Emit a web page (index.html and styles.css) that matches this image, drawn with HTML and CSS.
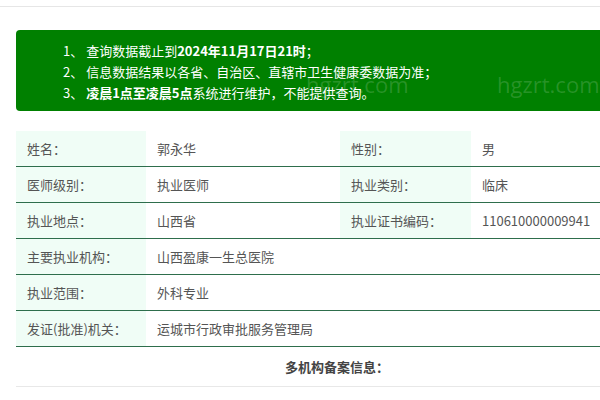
FILE: index.html
```html
<!DOCTYPE html>
<html lang="zh">
<head>
<meta charset="utf-8">
<link rel="stylesheet" href="styles.css">
</head>
<body>
<div class="topline"></div>
<div class="wrap">
  <div class="notice">
    <p>1、 查询数据截止到<b>2024年11月17日21时</b>；</p>
    <p>2、 信息数据结果以各省、自治区、直辖市卫生健康委数据为准；</p>
    <p>3、 <b>凌晨1点至凌晨5点</b>系统进行维护，不能提供查询。</p>
    <span class="wm wm1">hgzrt.com</span>
    <span class="wm wm2">hgzrt.com</span>
  </div>
  <table class="info">
    <colgroup>
      <col class="c1"><col class="c2"><col class="c3"><col class="c4">
    </colgroup>
    <tr><td class="lab">姓名：</td><td>郭永华</td><td class="lab">性别：</td><td>男</td></tr>
    <tr><td class="lab">医师级别：</td><td>执业医师</td><td class="lab">执业类别：</td><td>临床</td></tr>
    <tr><td class="lab">执业地点：</td><td>山西省</td><td class="lab">执业证书编码：</td><td>110610000009941</td></tr>
    <tr><td class="lab">主要执业机构：</td><td colspan="3">山西盈康一生总医院</td></tr>
    <tr><td class="lab">执业范围：</td><td colspan="3">外科专业</td></tr>
    <tr><td class="lab">发证(批准)机关：</td><td colspan="3">运城市行政审批服务管理局</td></tr>
    <tr class="multi"><td colspan="4">多机构备案信息：</td></tr>
  </table>
</div>
</body>
</html>
```
FILE: styles.css
```css
html, body {
  margin: 0;
  padding: 0;
  overflow: hidden;
  background: #fff;
  font-family: "Noto Sans CJK SC", "Noto Sans", sans-serif;
  font-size: 13px;
  color: #555;
}
.topline {
  height: 1px;
  margin-top: 6px;
  background: #e6e6e6;
}
.wrap {
  width: 642px;
  padding: 0 16px;
}
.notice {
  position: relative;
  margin-top: 23px;
  background: #008000;
  border-radius: 4px;
  padding: 10px 0 8px 47px;
  color: #fff;
  line-height: 21px;
  overflow: hidden;
}
.notice p {
  margin: 0;
}
.notice b {
  font-weight: bold;
}
.wm {
  position: absolute;
  top: 44px;
  font-family: "Open Sans", sans-serif;
  font-size: 22px;
  color: rgba(255, 255, 255, 0.16);
  pointer-events: none;
}
.wm1 { left: 290px; }
.wm2 { left: 481px; }
.info {
  margin-top: 20px;
  width: 642px;
  border-collapse: collapse;
  table-layout: fixed;
}
.c1 { width: 130px; }
.c2 { width: 194px; }
.c3 { width: 131px; }
.info td {
  height: 35px;
  padding: 0 0 0 11px;
  border-bottom: 1px solid #2e6e4c;
  white-space: nowrap;
  vertical-align: middle;
}
.info td.lab {
  background: #f0fdf6;
}
.info tr.multi td {
  height: 39px;
  padding: 0;
  text-align: center;
  font-weight: bold;
  color: #444;
  border-bottom: 1px solid #e8e8e8;
}
```
